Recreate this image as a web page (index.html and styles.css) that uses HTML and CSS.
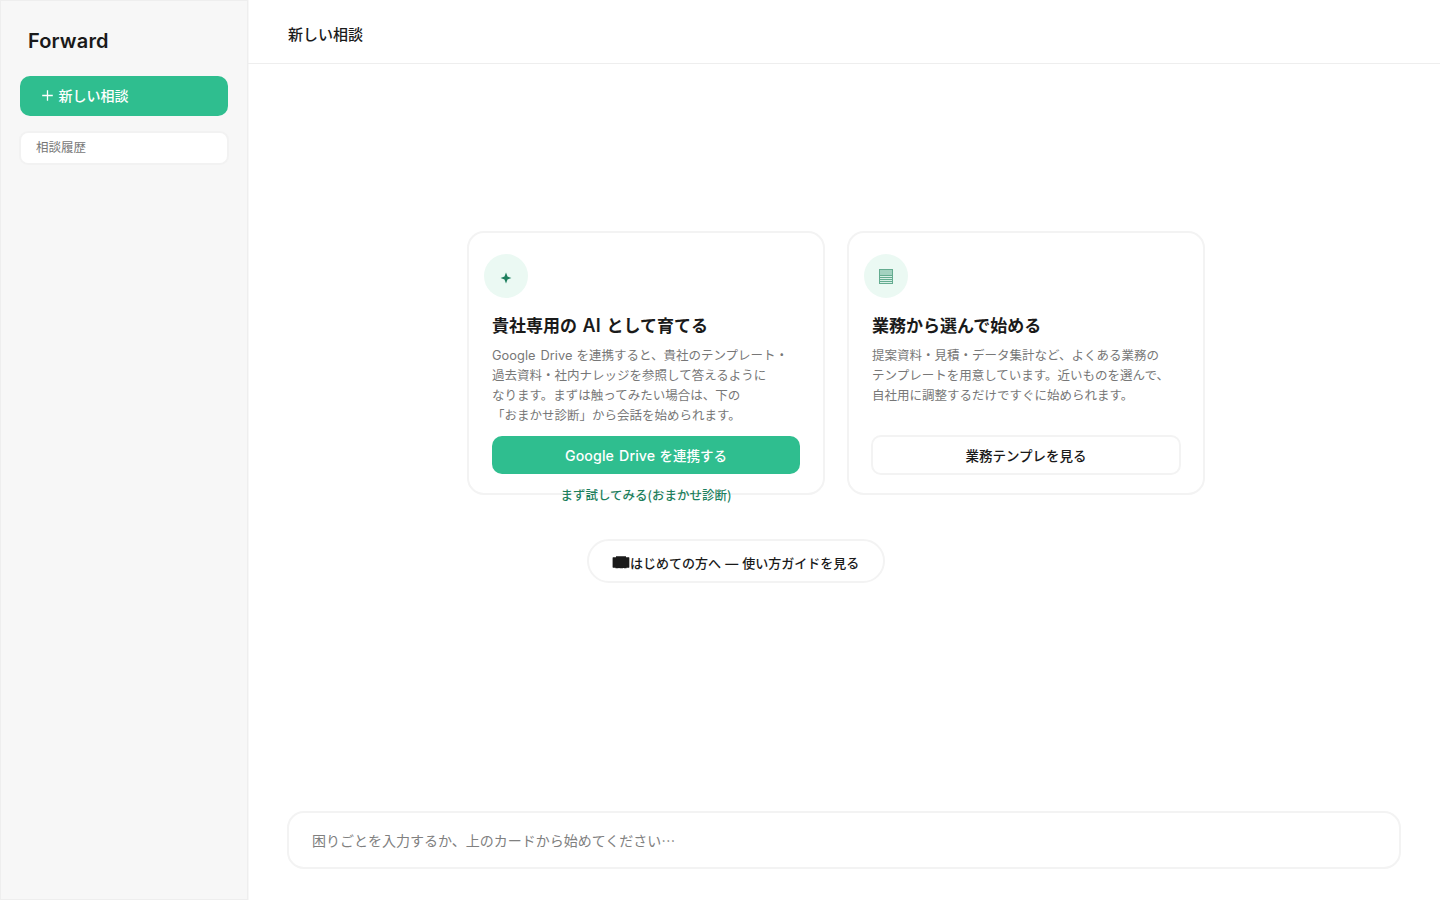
FILE: index.html
```html
<!DOCTYPE html>
<html lang="ja">
<head>
<meta charset="utf-8">
<title>Forward</title>
<link rel="stylesheet" href="styles.css">
</head>
<body>
<div class="app">
  <aside class="sidebar">
    <div class="brand"><span class="brand-text">Forward</span></div>
    <button class="new-chat"><svg class="plus" width="11" height="11" viewBox="0 0 11 11"><path d="M5.5 .2v10.6M.2 5.5h10.6" stroke="#fff" stroke-width="1.3" fill="none"/></svg><span>新しい相談</span></button>
    <div class="history">相談履歴</div>
  </aside>
  <main class="main">
    <header class="header"><h1 class="page-title">新しい相談</h1></header>
    <section class="content">
      <div class="cards">
        <article class="card">
          <div class="icon"><svg width="12" height="12" viewBox="0 0 12 12"><path d="M6 .6L7.5 4.5L11.4 6L7.5 7.5L6 11.4L4.5 7.5L.6 6L4.5 4.5Z" fill="#1d7f5d"/></svg></div>
          <h2 class="card-title">貴社専用の <span class="ai">AI</span> として育てる</h2>
          <p class="desc"><span class="drive">Google Drive</span> を連携すると、貴社のテンプレート・<br>過去資料・社内ナレッジを参照して答えるように<br>なります。まずは触ってみたい場合は、下の<br>「おまかせ診断」から会話を始められます。</p>
          <button class="btn primary"><span class="drive-btn">Google Drive</span> を連携する</button>
          <a class="try">まず試してみる(おまかせ診断)</a>
        </article>
        <article class="card">
          <div class="icon sheet"><svg width="16" height="16" viewBox="0 0 16 16" shape-rendering="crispEdges"><path d="M1 0h14v7H1z" fill="#a3d2c0"/><path d="M1 7h14v8H1z" fill="#d8f0e6"/><path d="M1 .5h14M1 6.5h14M1 8.5h14M1 10.5h14M1 12.5h14M1 14.5h14M1.5 0v15M14.5 0v15" stroke="#64ac90" fill="none"/></svg></div>
          <h2 class="card-title">業務から選んで始める</h2>
          <p class="desc">提案資料・見積・データ集計など、よくある業務の<br>テンプレートを用意しています。近いものを選んで、<br>自社用に調整するだけですぐに始められます。</p>
          <button class="btn secondary">業務テンプレを見る</button>
        </article>
      </div>
      <button class="guide"><svg class="book" width="18" height="13" viewBox="0 0 18 13"><path d="M1 1.3H4V.3H14V1.3H17V11.7H14.5V12.3H12V11.9H11V12.3H7.5V11.9H6.5V12.3H3.5V11.7H1Z" fill="#1a1a1a"/><path d="M.7 1.5v10M17.2 1.5v10" stroke="#1a1a1a" stroke-width=".5"/></svg><span class="guide-text">はじめての方へ <span class="dash">—</span> 使い方ガイドを見る</span></button>
    </section>
    <footer class="composer">困りごとを入力するか、上のカードから始めてください…</footer>
  </main>
</div>
</body>
</html>
```
FILE: styles.css
```css
* { box-sizing: border-box; }
body { margin: 0; background: #fff; color: #1a1a1a; font-family: "Noto Sans CJK JP", sans-serif; }
button { font-family: inherit; color: inherit; border: 0; margin: 0; padding: 0; }
h1, h2, p { margin: 0; }
.app { display: flex; width: 1440px; height: 900px; overflow: hidden; }
.sidebar { width: 248px; flex: none; background: #f7f7f7; border: 1px solid #eee; box-shadow: 1px 0 #f7f7f7; padding: 25px 18px; display: flex; flex-direction: column; }
.brand { height: 32px; padding-left: 9px; margin-bottom: 18px; font: 600 20px/31px Inter, sans-serif; }
.brand-text { letter-spacing: .15px; }
.new-chat { height: 40px; margin: 0 1px; border-radius: 10px; background: #2fbe8f; color: #fff; display: flex; align-items: center; gap: 6px; padding: 0 0 2px 21.5px; font-size: 14px; font-weight: 500; line-height: 20px; }
.history { height: 34px; margin: 15px 0 0; width: 210px; border: 2px solid #f2f2f2; border-radius: 9px; background: #fff; color: #777; font-size: 12.5px; line-height: 28px; padding-left: 15px; }
.header { height: 64px; flex: none; border-bottom: 1px solid #eee; padding: 22px 40px 0; }
.main { flex: 1; display: flex; flex-direction: column; }
.page-title { font-size: 15px; font-weight: 500; line-height: 24px; }
.content { flex: 1; padding: 167px 0 0 219px; }
.cards { display: grid; grid-template-columns: 358px 358px; gap: 22px; }
.card { height: 264px; border: 2px solid #f3f3f3; border-radius: 17px; padding: 21px 23px 0; display: flex; flex-direction: column; }
.icon { width: 44px; height: 44px; flex: none; margin-left: -8px; border-radius: 50%; background: #ebf9f3; display: flex; align-items: center; justify-content: center; padding-top: 4px; }
.sheet { padding-top: 2px; }
.card-title { height: 26px; font-size: 17px; font-weight: 700; line-height: 26px; margin-top: 14px; white-space: nowrap; word-spacing: 1.7px; }
.ai { font-family: Inter, sans-serif; font-size: 18px; font-weight: 600; letter-spacing: .1px; line-height: 0; }
.desc { height: 80px; margin-top: 7px; color: #777; font-size: 12.5px; line-height: 20px; white-space: nowrap; font-weight: 400; word-spacing: 1.2px; }
.drive { font-family: Inter, sans-serif; font-size: 12.8px; letter-spacing: .05px; line-height: 0; }
.drive-btn { font-family: Inter, sans-serif; font-size: 14.2px; letter-spacing: .1px; line-height: 0; }
.btn { height: 38px; flex: none; margin-top: 11px; border-radius: 10px; font-size: 13.5px; font-weight: 500; line-height: 38px; word-spacing: 1.2px; }
.primary { background: #2fbe8f; color: #fff; }
.secondary { margin: 10px -1px 0; height: 40px; background: #fff; border: 2px solid #f3f3f3; line-height: 36px; }
.try { color: #1d7f5d; font-size: 12.5px; font-weight: 500; line-height: 20px; margin-top: 11px; text-align: center; white-space: nowrap; }
.guide { display: flex; align-items: center; width: 298px; height: 44px; margin: 44px 0 0 120px; border: 2px solid #f3f3f3; border-radius: 22px; background: #fff; font-size: 13px; font-weight: 500; line-height: 20px; padding: 3px 0 0 23px; white-space: nowrap; word-spacing: 1.2px; }
.guide-text { padding-top: 1px; }
.dash { font-family: Inter, sans-serif; line-height: 0; }
.book { flex: none; margin-bottom: 1px; }
.composer { height: 58px; flex: none; margin: 0 39px 31px; border: 2px solid #f3f3f3; border-radius: 17px; padding-left: 23px; color: #808080; font-size: 14px; line-height: 54px; }
```
